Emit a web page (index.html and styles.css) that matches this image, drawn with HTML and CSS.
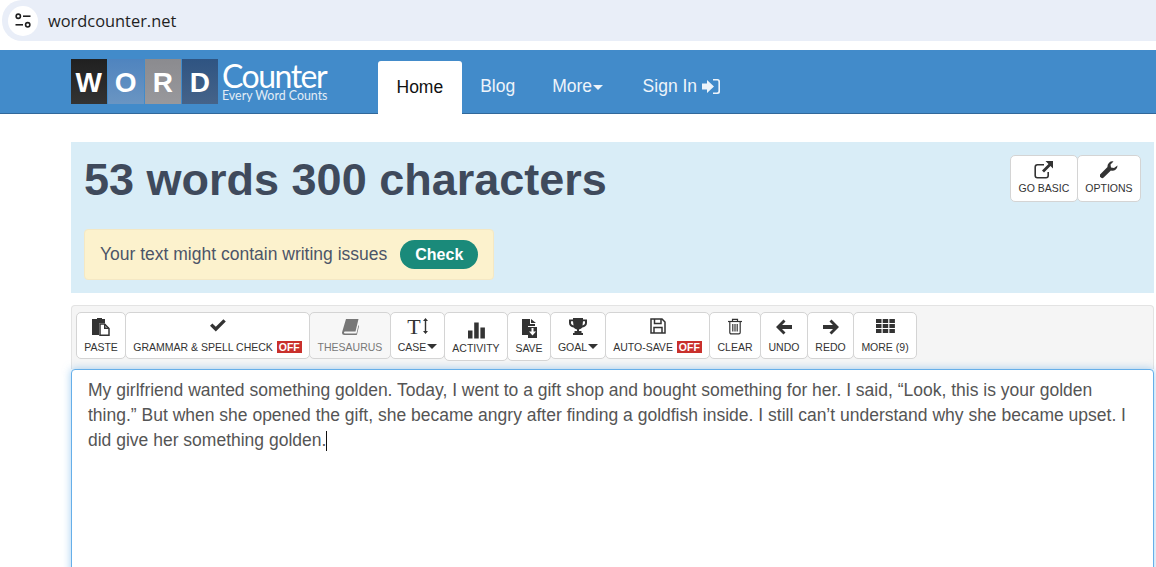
FILE: index.html
```html
<!DOCTYPE html>
<html lang="en">

<head>
    <meta charset="UTF-8">
    <meta name="viewport" content="width=device-width, initial-scale=1.0">
    <title>Word Counter</title>
    <link rel="stylesheet" href="styles.css">
</head>

<body>
    <!-- browser address bar -->
    <div class="address-bar">
        <span class="site-icon">
            <svg width="18" height="15" viewBox="0 0 16 14" fill="none" stroke="#1f1f1f" stroke-width="1.500">
                <circle cx="3.600" cy="3" r="2"/>
                <path d="M8 3h7"/>
                <path d="M1 11h7"/>
                <circle cx="12.400" cy="11" r="2"/>
            </svg>
        </span>
        <span class="url">wordcounter.net</span>
    </div>

    <nav class="navbar">
        <div class="logo">
            <span class="tile tile-w">W</span>
            <span class="tile tile-o">O</span>
            <span class="tile tile-r">R</span>
            <span class="tile tile-d">D</span>
            <div class="logo-text">
                <span class="logo-counter">Counter</span>
                <span class="logo-tag">Every Word Counts</span>
            </div>
        </div>
        <ul class="nav-links">
            <li class="active">Home</li>
            <li>Blog</li>
            <li class="nav-more">More<i class="caret caret-nav"></i></li>
            <li class="signin">
                <span>Sign In</span>
                <svg width="18" height="15" viewBox="0 0 18 15" fill="#eef4fa">
                    <path d="M0 4.500h5V1l7 6.500L5 14v-3.500H0z"/>
                    <path d="M11 0h4.500A2.500 2.500 0 0 1 18 2.500v10a2.500 2.500 0 0 1-2.500 2.500H11v-1.600h4a1.400 1.400 0 0 0 1.400-1.400V3A1.400 1.400 0 0 0 15 1.600h-4z"/>
                </svg>
            </li>
        </ul>
    </nav>

    <main class="content">
        <section class="hero">
            <div class="hero-top">
                <h1>53 words 300 characters</h1>
                <div class="hero-buttons">
                    <button class="tool tool-basic">
                        <svg width="20" height="18" viewBox="0 0 20 18" fill="#333">
                            <path d="M3.500 3H10v1.600H3.500a1.500 1.500 0 0 0-1.500 1.500v8.400A1.500 1.500 0 0 0 3.500 16h8.400a1.500 1.500 0 0 0 1.500-1.500V11H15v3.600a3 3 0 0 1-3 3H3.400a3 3 0 0 1-3-3V6a3 3 0 0 1 3-3z"/>
                            <path d="M11.500 0H19v7.500l-2.500-2.500-6.500 6.500-2-2L14.500 3z"/>
                        </svg>
                        <span>GO BASIC</span>
                    </button>
                    <button class="tool tool-options">
                        <svg width="18" height="18" viewBox="0 0 18 18" fill="#333">
                            <path d="M17.500 4.500a5 5 0 0 1-6.600 4.900L3.700 16.600a2 2 0 0 1-2.800 0l-.6-.6a2 2 0 0 1 0-2.800l7.200-7.200A5 5 0 0 1 13.500.5l-3 3 .5 3 3 .5z"/>
                        </svg>
                        <span>OPTIONS</span>
                    </button>
                </div>
            </div>
            <div class="issues">
                <span>Your text might contain writing issues</span>
                <span class="check-pill">Check</span>
            </div>
        </section>

        <section class="toolbar">
            <button class="tool tool-paste">
                <svg width="18" height="18" viewBox="0 0 18 18">
                    <path fill="#333" d="M0 1h5V0h5v1h3v4H8a1 1 0 0 0-1 1v11H0z"/>
                    <path fill="none" stroke="#333" stroke-width="1.500" d="M8 6h4.500l4.500 4.500V17.200H8z"/>
                    <path fill="#333" d="M12 6h1.500v3.500H17V11h-5z"/>
                </svg>
                <span>PASTE</span>
            </button>
            <button class="tool tool-grammar">
                <svg width="16" height="13" viewBox="0 0 16 13" fill="#333">
                    <path d="M5.800 12.600 0 6.800l2.400-2.400 3.400 3.400L13.400.2 15.800 2.600z"/>
                </svg>
                <span>GRAMMAR &amp; SPELL CHECK <em class="off">OFF</em></span>
            </button>
            <button class="tool tool-thesaurus">
                <svg width="17" height="16" viewBox="0 0 17 16" fill="#777">
                    <path d="M4 0h12.500l-3 12.500H3a1 1 0 0 0 0 2h11.500l2-8.500.5 1-2 8.500-.5.500H2.500A2.500 2.500 0 0 1 0 13.500z"/>
                </svg>
                <span>THESAURUS</span>
            </button>
            <button class="tool tool-case">
                <span class="case-icon">T<svg width="5" height="16" viewBox="0 0 5 16" fill="#333"><path d="M2.500 0L5 3H3.200V13H5L2.500 16 0 13H1.800V3H0z"/></svg></span>
                <span class="case-label">CASE<i class="caret"></i></span>
            </button>
            <button class="tool tool-activity tool-tall">
                <svg width="17" height="17" viewBox="0 0 17 16" fill="#333">
                    <rect x="0" y="8" width="4.500" height="8"/>
                    <rect x="6.200" y="0" width="4.500" height="16"/>
                    <rect x="12.400" y="5" width="4.500" height="11"/>
                </svg>
                <span>ACTIVITY</span>
            </button>
            <button class="tool tool-save tool-tall">
                <svg width="15" height="19" viewBox="0 0 15 19">
                    <path fill="#333" d="M0 0h8v5h5v2H6v9H0z"/>
                    <path fill="#333" d="M9 0l5 4H9z"/>
                    <path fill="#333" d="M6 8h9v11H6z"/>
                    <path fill="#fff" d="M9.500 9h2v3.500h2.500l-3.500 4-3.500-4h2.500z"/>
                </svg>
                <span>SAVE</span>
            </button>
            <button class="tool tool-goal">
                <svg width="18" height="17" viewBox="0 0 18 17" fill="#333">
                    <path d="M4 0h10v1.500h4V5c0 2.500-2 4-4.600 4.400A6 6 0 0 1 10 11.500V13h2.500v2H14v2H4v-2h1.500v-2H8v-1.500a6 6 0 0 1-3.400-2.100C2 9 0 7.500 0 5V1.500h4zM2 3.200V5c0 1.200 1 2 2.500 2.400L4 3.200zm14 0h-2l-.5 4.200C15 7 16 6.200 16 5z"/>
                </svg>
                <span class="case-label">GOAL<i class="caret"></i></span>
            </button>
            <button class="tool tool-autosave">
                <svg width="16" height="16" viewBox="0 0 16 16" fill="none" stroke="#333" stroke-width="1.500">
                    <path d="M1 1h11l3 3v11H1z"/>
                    <path d="M4.500 1v4.500h6.500V1"/>
                    <path d="M4 15V9.500h8V15"/>
                </svg>
                <span>AUTO-SAVE <em class="off">OFF</em></span>
            </button>
            <button class="tool tool-clear">
                <svg width="14" height="17" viewBox="0 0 14 16" fill="none" stroke="#333" stroke-width="1.200">
                    <path d="M0 3h14"/>
                    <path d="M4.500 3V.8h5V3"/>
                    <path d="M1.800 3v11a1.400 1.400 0 0 0 1.400 1.400h7.600a1.400 1.400 0 0 0 1.400-1.400V3"/>
                    <path d="M4.800 5.500v7.500M7 5.500v7.500M9.200 5.500v7.500"/>
                </svg>
                <span>CLEAR</span>
            </button>
            <button class="tool tool-undo">
                <svg width="16" height="16" viewBox="0 0 16 15" fill="#333">
                    <path d="M7.500 0l2 2-3.500 3.500H16v4H6L9.500 13l-2 2L0 7.500z"/>
                </svg>
                <span>UNDO</span>
            </button>
            <button class="tool tool-redo">
                <svg width="16" height="16" viewBox="0 0 16 15" fill="#333">
                    <path d="M8.500 0l-2 2L10 5.500H0v4h10L6.500 13l2 2L16 7.500z"/>
                </svg>
                <span>REDO</span>
            </button>
            <button class="tool tool-more">
                <svg width="19" height="14" viewBox="0 0 19 14" fill="#333">
                    <rect x="0" y="0" width="5.500" height="4"/><rect x="6.700" y="0" width="5.500" height="4"/><rect x="13.400" y="0" width="5.500" height="4"/>
                    <rect x="0" y="5" width="5.500" height="4"/><rect x="6.700" y="5" width="5.500" height="4"/><rect x="13.400" y="5" width="5.500" height="4"/>
                    <rect x="0" y="10" width="5.500" height="4"/><rect x="6.700" y="10" width="5.500" height="4"/><rect x="13.400" y="10" width="5.500" height="4"/>
                </svg>
                <span>MORE (9)</span>
            </button>
        </section>

        <div class="editor">My girlfriend wanted something golden. Today, I went to a gift shop and bought something for her. I said, “Look, this is your golden thing.” But when she opened the gift, she became angry after finding a goldfish inside. I still can’t understand why she became upset. I did give her something golden.<span class="text-cursor"></span></div>
    </main>
</body>

</html>
```

FILE: styles.css
```css
html,
body {
    margin: 0;
    height: 567px;
    overflow: hidden;
    background-color: white;
    font-family: "Liberation Sans", Arial, sans-serif;
}

.address-bar {
    display: flex;
    align-items: center;
    height: 41px;
    margin-left: 2px;
    padding-left: 6px;
    gap: 10px;
    background-color: #e9eef8;
    border-radius: 20px 0 0 20px;
}

.site-icon {
    display: flex;
    align-items: center;
    justify-content: center;
    width: 30px;
    height: 30px;
    border-radius: 50%;
    background-color: white;
}

.url {
    font-family: "Open Sans", sans-serif;
    font-size: 16.400px;
    color: #1f1f1f;
}

.navbar {
    display: flex;
    height: 63px;
    margin-top: 9px;
    padding-left: 71px;
    background-color: #428bca;
    border-bottom: 1px solid #31689a;
}

.logo {
    display: flex;
    align-items: flex-start;
    width: 307px;
    padding-top: 9px;
    gap: 1.500px;
}

.tile {
    width: 35.500px;
    height: 45px;
    line-height: 47px;
    text-align: center;
    font-size: 28px;
    font-weight: bold;
    color: white;
}

.tile-w {
    background: linear-gradient(#202020, #333333);
}

.tile-o {
    background: linear-gradient(#4f84bf, #6a95c2);
}

.tile-r {
    background: linear-gradient(#8b8b8f, #98989c);
}

.tile-d {
    background: linear-gradient(#2f5482, #456389);
}

.logo-text {
    display: flex;
    flex-direction: column;
    margin-left: 3px;
    color: white;
    font-family: "Lato", sans-serif;
}

.logo-counter {
    font-size: 32px;
    letter-spacing: -1.500px;
    line-height: 29px;
    margin-top: 2px;
}

.logo-tag {
    font-size: 12.400px;
    line-height: 11px;
    white-space: nowrap;
    color: #e3edf6;
}

.nav-links {
    display: flex;
    list-style: none;
    margin: 11px 0 0;
    padding: 0;
    font-size: 17.500px;
    color: #eef4fa;
}

.nav-links li {
    display: flex;
    align-items: center;
    height: 50px;
    padding: 0 18.500px;
}

.nav-links .nav-more {
    padding-right: 21px;
}

.nav-links .signin {
    gap: 5px;
}

.nav-links .active {
    height: 53px;
    background-color: white;
    color: #111;
    border-radius: 3px 3px 0 0;
}

.caret {
    display: inline-block;
    width: 0;
    height: 0;
    margin-left: 1px;
    border-top: 5px solid #333;
    border-left: 5px solid transparent;
    border-right: 5px solid transparent;
    vertical-align: 2px;
}

.caret-nav {
    border-top-color: #eef4fa;
    margin-top: 3px;
}

.content {
    margin: 28px 2px 0 71px;
}

.hero {
    height: 151px;
    background-color: #d9edf7;
    padding: 0 13px;
    box-sizing: border-box;
}

.hero-top {
    display: flex;
    justify-content: space-between;
    height: 87px;
}

.hero h1 {
    margin: 13px 0 0;
    font-size: 45px;
    line-height: 50px;
    color: #3f4a5c;
}

.hero-buttons {
    display: flex;
    margin-top: 13px;
    margin-right: 1px;
}

.issues {
    display: flex;
    align-items: center;
    width: 410px;
    height: 51px;
    padding-left: 15px;
    gap: 13px;
    box-sizing: border-box;
    background-color: #fcf2cd;
    border: 1px solid #f4e8c4;
    border-radius: 4px;
    font-size: 17.500px;
    color: #4c5568;
}

.check-pill {
    width: 78px;
    height: 29px;
    line-height: 29px;
    text-align: center;
    border-radius: 15px;
    background-color: #1a8a7a;
    color: white;
    font-weight: bold;
    font-size: 16px;
}

.toolbar {
    display: flex;
    align-items: flex-start;
    height: 64px;
    margin-top: 12px;
    padding: 6px 4px 0;
    box-sizing: border-box;
    background-color: #f5f5f5;
    border: 1px solid #e3e3e3;
    border-bottom: 0;
    border-radius: 4px 4px 0 0;
}

.tool {
    position: relative;
    display: flex;
    flex-direction: column;
    align-items: center;
    flex: none;
    height: 47px;
    margin-right: -1px;
    padding: 5px 0 0;
    box-sizing: border-box;
    background-color: white;
    border: 1px solid #d4d4d4;
    border-radius: 5px;
    font-family: "Liberation Sans", Arial, sans-serif;
    font-size: 10.500px;
    color: #333;
    white-space: nowrap;
}

.tool svg {
    flex: none;
}

.tool > span {
    position: absolute;
    top: 28px;
}

.hero-buttons .tool > span {
    top: 26px;
}

.tool-tall {
    height: 49px;
}

.tool-tall > span {
    top: 29px;
}

.tool-paste {
    width: 50px;
}

.tool-grammar {
    width: 185px;
    padding-top: 6px;
}

.tool-thesaurus {
    width: 82px;
    padding-top: 6px;
    background-color: #f7f7f7;
    color: #777;
}

.tool-case {
    width: 55px;
}

.tool-activity {
    width: 64px;
    padding-top: 9px;
}

.tool-save {
    width: 44px;
    padding-top: 6px;
}

.tool-goal {
    width: 56px;
}

.tool-autosave {
    width: 105px;
}

.tool-clear {
    width: 52px;
}

.tool-undo {
    width: 48px;
    padding-top: 6px;
}

.tool-redo {
    width: 47px;
    padding-top: 6px;
}

.tool-more {
    width: 64px;
    padding-top: 6px;
}

.tool-basic {
    width: 68px;
}

.tool-options {
    width: 64px;
}

.off {
    display: inline-block;
    margin-left: 1px;
    padding: 0 2px;
    background-color: #c9302c;
    color: white;
    font-style: normal;
    font-weight: bold;
    line-height: 12px;
}

.tool > .case-icon {
    position: static;
    display: flex;
    align-items: flex-start;
    margin-top: -1px;
    font-family: "Liberation Serif", serif;
    font-size: 22px;
    line-height: 20px;
}

.case-icon svg {
    margin: 1px 0 0 2px;
}

.editor {
    height: 300px;
    padding: 8px 16px;
    box-sizing: border-box;
    background-color: white;
    border: 1px solid #66afe9;
    border-radius: 4px;
    box-shadow: 0 0 8px rgba(102, 175, 233, 0.6);
    font-size: 17.500px;
    line-height: 25px;
    color: #555;
}

.text-cursor {
    display: inline-block;
    width: 1px;
    height: 20px;
    background-color: #111;
    vertical-align: -5px;
}
```
